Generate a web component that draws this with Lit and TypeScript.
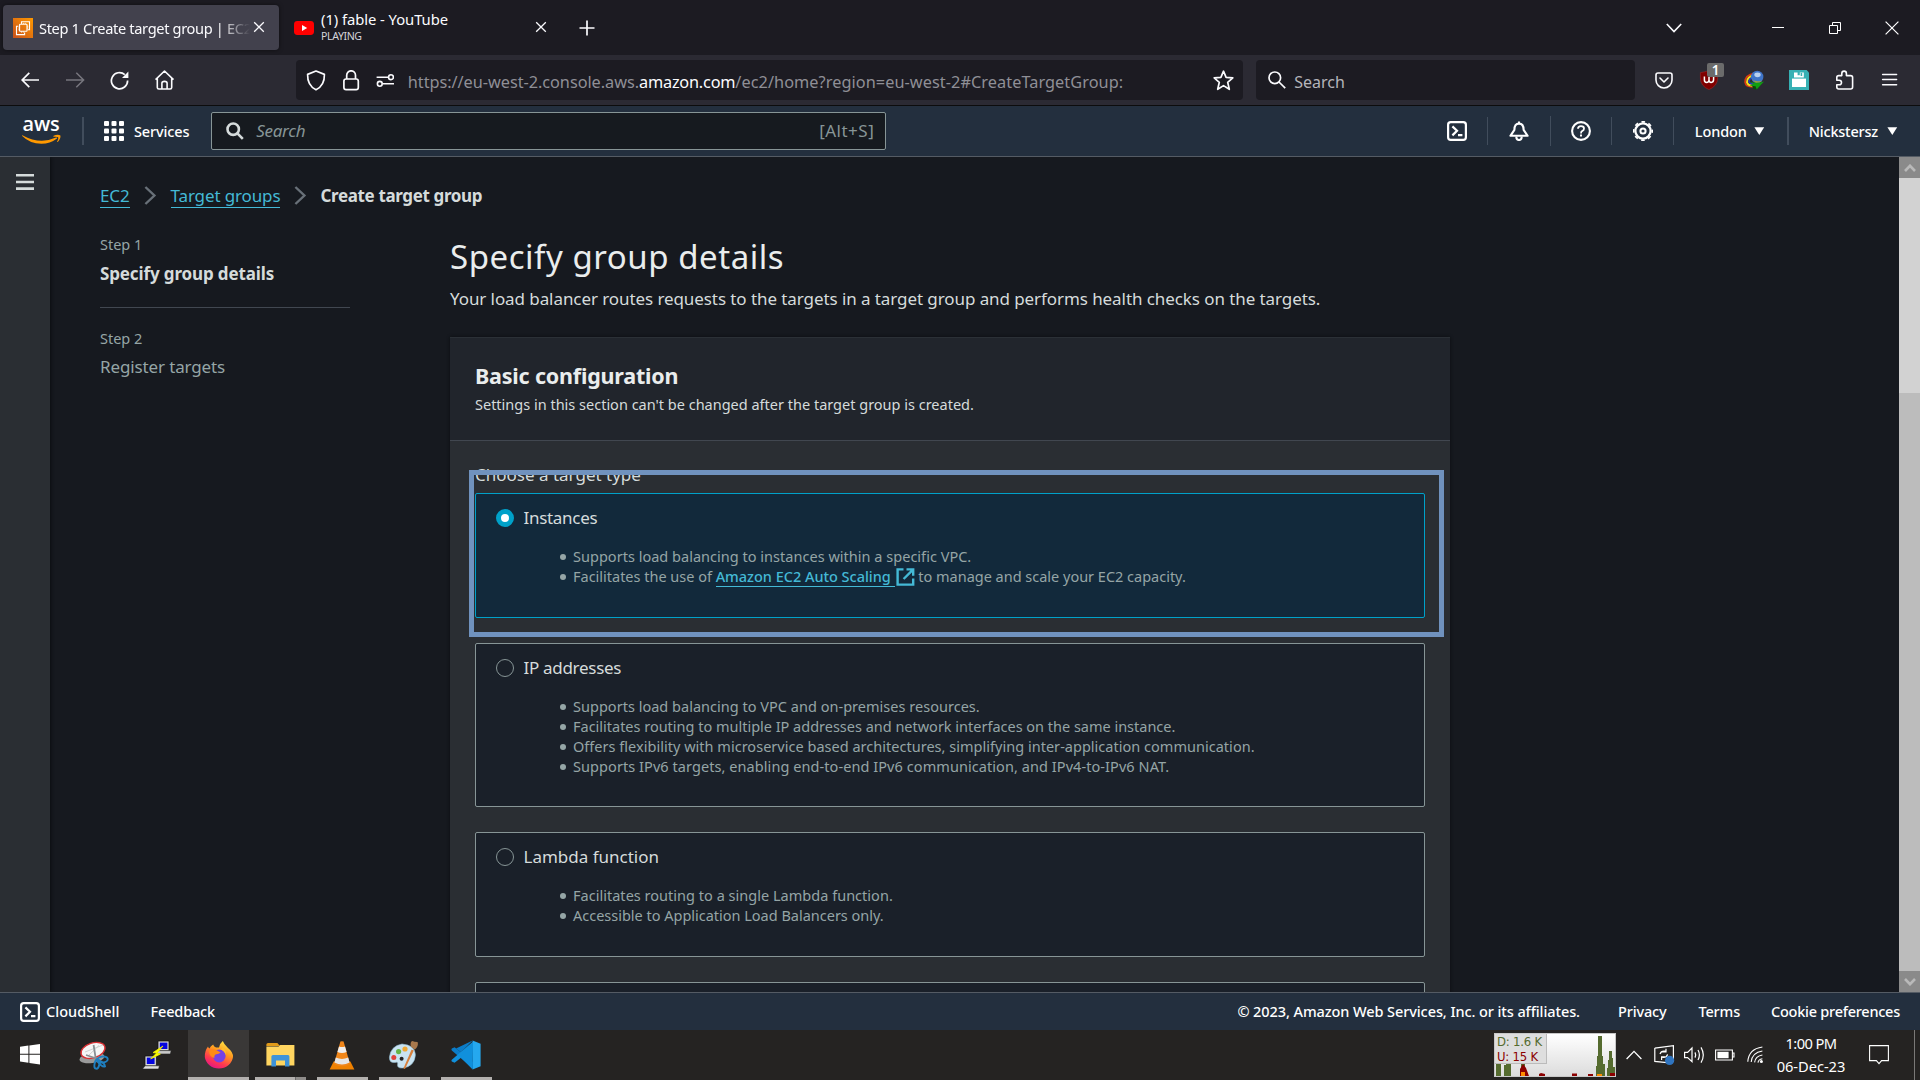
import { LitElement, html, css, svg } from "lit";
import { customElement } from "lit/decorators.js";

interface TargetType {
  id: string;
  label: string;
  points: unknown[];
}

const externalIcon = html`<svg class="ext" width="19" height="18" viewBox="0 0 19 18" fill="none" stroke="currentColor" stroke-width="2.4"><path d="M7.5 1.4H1.6V16.6H17.2V10.5M10.5 1.4H17.2V7.8M17 1.6L7.6 11"/></svg>`;

const TARGET_TYPES: TargetType[] = [
  {
    id: "instances",
    label: "Instances",
    points: [
      "Supports load balancing to instances within a specific VPC.",
      html`Facilitates the use of <a class="link asg">Amazon EC2 Auto Scaling&nbsp;</a>${externalIcon} to manage and scale your EC2 capacity.`,
    ],
  },
  {
    id: "ip",
    label: "IP addresses",
    points: [
      "Supports load balancing to VPC and on-premises resources.",
      "Facilitates routing to multiple IP addresses and network interfaces on the same instance.",
      "Offers flexibility with microservice based architectures, simplifying inter-application communication.",
      "Supports IPv6 targets, enabling end-to-end IPv6 communication, and IPv4-to-IPv6 NAT.",
    ],
  },
  {
    id: "lambda",
    label: "Lambda function",
    points: [
      "Facilitates routing to a single Lambda function.",
      "Accessible to Application Load Balancers only.",
    ],
  },
  { id: "alb", label: "", points: [] },
];

const closeIcon = html`<svg width="12" height="12" viewBox="0 0 12 12" stroke="#fbfbfe" stroke-width="1.3"><path d="M1.2 1.2L10.8 10.8M10.8 1.2L1.2 10.8"/></svg>`;

const cloudShellIcon = html`<svg width="20" height="20" viewBox="0 0 20 20" fill="none" stroke="#fff" stroke-width="2.2"><rect x="1.1" y="1.1" width="17.8" height="17.8" rx="2.6"/><path d="M5.4 5.4L10 9.8L5.4 14.4M11 14.2H15.4"/></svg>`;

@customElement("app-root")
export class AppRoot extends LitElement {
  static styles = css`
    :host {
      display: flex;
      flex-direction: column;
      width: 1920px;
      height: 1080px;
      overflow: hidden;
      background: #16191f;
      color: #d5dbdb;
      font-family: "Noto Sans", "Open Sans", sans-serif;
      font-size: 14.5px;
      white-space: nowrap;
    }
    * { box-sizing: border-box; }
    svg { display: block; flex: none; }
    .row { display: flex; align-items: center; }

    /* browser tabs */
    .tabs { height: 55px; background: #1c1b22; padding: 5px 21px 5px 3px; flex: none; }
    .tab { display: flex; align-items: center; height: 45px; border-radius: 4px; color: #fbfbfe; }
    .tab.active { width: 276px; background: #42414d; box-shadow: 0 0 4px rgba(0, 0, 0, 0.5); padding: 1px 14px 0 10px; }
    .tab-title { width: 215px; margin-left: 6px; overflow: hidden; font-size: 14.6px; letter-spacing: -0.34px; line-height: 20px; -webkit-mask-image: linear-gradient(to right, #000 180px, transparent 211px); mask-image: linear-gradient(to right, #000 180px, transparent 211px); }
    .tab.active svg:last-child { margin-left: -1px; margin-top: -2px; }
    .tab.idle { width: 275px; padding: 0 7px 0 15px; }
    .tab-stack { margin: -2px 0 0 7px; flex: 1; }
    .tab-name { font-size: 14.8px; line-height: 18px; letter-spacing: -0.06px; }
    .tab-sub { font-size: 10.6px; line-height: 14px; letter-spacing: -0.4px; color: #d5d5da; padding-top: 1px; }
    .idle-close { margin-top: -1px; }
    .new-tab { margin-left: 25px; }
    .win { margin-left: auto; display: flex; align-items: center; }
    .list-tabs { margin-right: 90px; }
    .restore { margin: 0 44px 0 45px; }

    /* browser toolbar */
    .toolbar { height: 51px; background: #2b2a33; border-bottom: 1px solid #0c0c0d; padding: 0 21px; flex: none; }
    .nav { display: flex; align-items: center; width: 275px; gap: 26px; }
    .fwd { margin: 0 -1px 0 1px; }
    .url { display: flex; align-items: center; width: 948px; height: 40px; border-radius: 4px; background: #1c1b22; padding: 0 9px 0 10px; }
    .url-text { margin-left: 14px; font-size: 16.3px; line-height: 24px; color: #8f8f96; letter-spacing: -0.04px; padding-top: 3px; }
    .url-path { letter-spacing: 0.06px; }
    .url-host { color: #fbfbfe; letter-spacing: -0.2px; }
    .star { margin-left: auto; }
    .find { display: flex; align-items: center; width: 379px; height: 40px; margin-left: 13px; border-radius: 4px; background: #1c1b22; padding-left: 12px; font-size: 16px; color: #b4b4ba; }
    .find-text { margin: 4px 0 0 8px; letter-spacing: 0; }
    .exts { display: flex; align-items: center; margin-left: 19px; gap: 25px; }
    .ublock { position: relative; }
    .count { position: absolute; left: 8px; top: -7px; width: 17px; height: 14px; border-radius: 2px; background: #6b6b6b; color: #fff; font: 600 13.5px/14px "Noto Sans", sans-serif; text-align: center; }

    /* console header */
    .aws { height: 51px; background: #232f3e; border-bottom: 1px solid #545b64; flex: none; color: #fff; font-weight: 500; letter-spacing: -0.15px; }
    .logo { margin-left: 22px; overflow: visible; }
    .services { margin-left: 10px; }
    .omni { display: flex; align-items: center; width: 675px; height: 38px; margin-left: 22px; border: 1px solid #879596; border-radius: 2px; background: #161a1f; color: #879596; font-weight: 400; font-size: 17px; padding: 0 11px 1px 14px; }
    .omni-text { font-style: italic; margin-left: 12px; flex: 1; letter-spacing: -0.3px; }
    .hot { letter-spacing: 0.5px; }
    .tools { display: flex; align-items: center; margin-left: auto; padding-right: 22px; }
    .lon { margin-right: 7px; letter-spacing: -0.1px; }
    .user { margin-right: 9px; letter-spacing: -0.22px; }

    /* body */
    .main { display: flex; height: 835px; flex: none; overflow: hidden; }
    .rail { width: 50px; background: #2a2e33; box-shadow: 1px 0 3px #0b0d10; padding: 17px 0 0 16px; z-index: 1; }
    .page { width: 1849px; padding: 26px 0 0 50px; }
    .crumbs { display: flex; align-items: center; height: 25px; font-size: 17px; letter-spacing: -0.13px; }
    .crumb-sep { margin: 0 14px 0 14px; }
    .current { font-weight: 700; letter-spacing: -0.36px; margin-left: -1px; }
    .link { color: #44b9d6; box-shadow: 0 1px 0 #44b9d6; cursor: pointer; }
    .crumbs .link { height: 23px; line-height: 23px; }
    .cols { display: flex; gap: 100px; }
    .steps { width: 250px; padding-top: 26px; }
    .step-no { line-height: 20px; color: #95a5a6; letter-spacing: 0; }
    .step-name { font-size: 17px; line-height: 25px; color: #95a5a6; letter-spacing: -0.13px; margin-top: 6px; }
    .step-name.on { font-weight: 700; color: #d5dbdb; margin-top: 7px; }
    .step-line { height: 1px; background: #414750; margin: 21px 0 20px; }
    .wizard { width: 1000px; padding-top: 26px; }
    h1, h2, ul { margin: 0; padding: 0; }
    h1 { font-size: 33px; font-weight: 400; line-height: 45px; letter-spacing: 0.54px; color: #eaeded; }
    .lead { margin-top: 7px; font-size: 17px; line-height: 25px; letter-spacing: -0.08px; }
    .card { margin-top: 26px; background: #2a2e33; box-shadow: 0 0 3px #0b0d10; height: 800px; }
    .card-head { height: 104px; border-top: 1px solid #2b3036; border-bottom: 1px solid #414750; background: #21252c; padding: 24px 0 0 25px; }
    h2 { font-size: 21.5px; line-height: 28px; letter-spacing: -0.2px; color: #eaeded; }
    .card-sub { margin-top: 4px; line-height: 20px; }
    .card-body { padding: 21px 25px 0; position: relative; }
    .field { font-size: 17px; line-height: 25px; letter-spacing: 0; margin-bottom: 6px; }
    .tile { height: 125px; border: 1px solid #879596; border-radius: 2px; background: #1a2029; padding: 11px 20px 0; margin-bottom: 25px; }
    .tile.ip { height: 164px; }
    .tile.instances { border-color: #00a1c9; background: #12293b; }
    .tile-head { display: flex; align-items: center; height: 25px; font-size: 17px; letter-spacing: -0.3px; }
    .lambda .tile-head { letter-spacing: 0; }
    .radio { width: 18px; height: 18px; border: 1.4px solid #879596; border-radius: 50%; margin-right: 9.5px; }
    .instances .radio { border: 5.5px solid #00a1c9; background: #fff; }
    .points { list-style: none; margin-top: 16px; padding-left: 64px; color: #95a5a6; }
    .points li { display: flex; align-items: center; height: 20px; white-space: pre; letter-spacing: 0.02px; }
    .points li:nth-child(4) { letter-spacing: 0.07px; }
    .points li:nth-child(2) { letter-spacing: -0.01px; }
    .points li::before { content: ""; width: 6px; height: 6px; border-radius: 50%; background: #95a5a6; margin: 1px 7px 0 0; }
    .asg { height: 20px; line-height: 20px; letter-spacing: -0.02px; font-weight: 500; }
    .ext { color: #44b9d6; margin: 1px 0 0 1px; }
    .marker { position: absolute; left: 19px; top: 29px; width: 975px; height: 167px; border: 5px solid #7092be; }

    .scroll { width: 21px; display: flex; flex-direction: column; background: #bcbcbc; }
    .btn { height: 21px; background: #8a8a8a; display: grid; place-items: center; }
    .thumb { height: 215px; background: #d2d2d2; margin-bottom: auto; }

    /* console footer */
    .foot { height: 38px; background: #232f3e; border-top: 1px solid #545b64; flex: none; color: #fff; font-weight: 500; padding: 0 20px; letter-spacing: -0.16px; }
    .foot span { padding-bottom: 2px; }
    .cs { margin: 0 31px 0 6px; letter-spacing: 0.02px; }
    .legal { margin-left: auto; letter-spacing: -0.09px; }
    .terms { margin: 0 31px 0 32px; }
    .privacy { margin-left: 38px; }
    .cookie { letter-spacing: -0.25px; }

    /* desktop taskbar */
    .task { height: 50px; background: #252322; flex: none; }
    .app { display: flex; flex-direction: column; align-items: center; justify-content: flex-end; height: 50px; width: 62px; }
    .app svg { margin: 0 auto 7px; }
    .app.start svg { margin: 0 auto 6px 20px; }
    .app.wide { width: 63px; }
    .app::after { content: ""; height: 3px; width: 51px; background: transparent; }
    .app.open::after { background: #b3b0ae; }
    .app.focus { background: #3a3837; width: 61px; margin-right: 0; }
    .app.focus::after { width: 61px; }
    .app.multi::after { background: linear-gradient(to right, #b3b0ae 40px, #6c6a69 40px 41px, #8f8c8a 41px); }
    .tray { display: flex; align-items: center; margin-left: auto; height: 50px; color: #fff; }
    .meter { position: relative; width: 122px; height: 44px; border: 1px solid #c8c8c8; background: linear-gradient(#fff, #dcdcdc); }
    .meter-label { position: absolute; left: 0; top: 0; width: 52px; height: 30px; background: #dedede; border-right: 1px solid #bbb; border-bottom: 1px solid #bbb; padding-left: 2px; font: 13px/15px "DejaVu Sans Condensed", "DejaVu Sans", sans-serif; letter-spacing: -0.2px; }
    .meter svg { position: absolute; left: 0; top: 0; }
    .down { color: #556b2f; }
    .up { color: #8b0000; }
    .clock { width: 90px; text-align: center; font-size: 14.7px; line-height: 23px; letter-spacing: -0.05px; margin-top: -1px; }
    .time { letter-spacing: -0.6px; }
    .peek { width: 1px; height: 50px; background: #7a7877; margin: 0 5px 0 25px; }
  `;

  private tabs() {
    return html`<div class="tabs row">
      <div class="tab active">
        <svg width="20" height="20" viewBox="0 0 20 20"><defs><linearGradient id="ec" x1="0" y1="1" x2="1" y2="0"><stop offset="0" stop-color="#c8511b"/><stop offset="1" stop-color="#ff9900"/></linearGradient></defs><rect width="20" height="20" fill="url(#ec)"/><g fill="none" stroke="#fff" stroke-width="1.1"><path d="M8.5 5.5V3.8H16.5V11.8H14.6"/><rect x="6.6" y="6.3" width="7.4" height="7" rx=".5"/><path d="M5.4 8.3H3.5V16.6H11.6V14.6"/><path d="M8.5 4.9V6M10.3 4.9V6M12.2 4.9V6M8.5 13.3V14.6M10.3 13.3V14.6M14 8.2H15.3M14 10H15.3M5.4 10H6.6M5.4 11.8H6.6" stroke-width=".8"/></g></svg>
        <div class="tab-title">Step 1 Create target group | EC2</div>
        ${closeIcon}
      </div>
      <div class="tab idle">
        <svg width="20" height="14" viewBox="0 0 20 14"><rect width="20" height="14" rx="3.4" fill="#f00"/><path d="M8 4L13.2 7L8 10Z" fill="#fff"/></svg>
        <div class="tab-stack"><div class="tab-name">(1) fable - YouTube</div><div class="tab-sub">PLAYING</div></div>
        <span class="idle-close">${closeIcon}</span>
      </div>
      <svg class="new-tab" width="16" height="16" viewBox="0 0 16 16" stroke="#fbfbfe" stroke-width="1.7"><path d="M8 .5V15.5M.5 8H15.5"/></svg>
      <div class="win">
        <svg class="list-tabs" width="16" height="10" viewBox="0 0 16 10" fill="none" stroke="#fbfbfe" stroke-width="1.6"><path d="M.8 1L8 8.6L15.2 1"/></svg>
        <svg width="12" height="1" viewBox="0 0 12 1" fill="#fff"><path d="M0 0H12V1H0Z"/></svg>
        <svg class="restore" width="12" height="12" viewBox="0 0 12 12" fill="none" stroke="#fff"><path d="M.5 3.5H8.5V11.5H.5ZM3.5 3.5V.5H11.5V8.5H8.5"/></svg>
        <svg width="14" height="14" viewBox="0 0 14 14" fill="none" stroke="#fff" stroke-width="1.2"><path d="M.6 .6L13.4 13.4M13.4 .6L.6 13.4"/></svg>
      </div>
    </div>`;
  }

  private toolbar() {
    return html`<div class="toolbar row">
      <div class="nav">
        <svg width="18" height="16" viewBox="0 0 18 16" fill="none" stroke="#fbfbfe" stroke-width="1.7"><path d="M18 8H1.2M8.3 .8L1.2 8L8.3 15.2"/></svg>
        <svg class="fwd" width="19" height="16" viewBox="0 0 19 16" fill="none" stroke="#77767e" stroke-width="1.5"><path d="M0 8H17.4M10.3 .8L17.6 8L10.3 15.2"/></svg>
        <svg width="19" height="19" viewBox="0 0 19 19" fill="none" stroke="#fbfbfe" stroke-width="1.7"><path d="M14.8 3.6A8.1 8.1 0 1 0 17.6 9.6"/><path d="M18.4 .6V7H12Z" fill="#fbfbfe" stroke="none"/></svg>
        <svg width="20" height="20" viewBox="0.5 0 20 20" fill="none" stroke="#fbfbfe" stroke-width="1.6" stroke-linejoin="round"><path d="M1 9.6L10 1L19 9.6M2.8 8.2V17.4Q2.8 19 4.4 19H15.6Q17.2 19 17.2 17.4V8.2M7.4 19V13.2Q7.4 11.4 10 11.4Q12.6 11.4 12.6 13.2V19"/></svg>
      </div>
      <div class="url">
        <svg width="20" height="21" viewBox="0 0 20 21" fill="none" stroke="#fbfbfe" stroke-width="1.7" stroke-linejoin="round"><path d="M10 1L18.4 4.4C18.6 11 16.6 16.6 10 19.8C3.4 16.6 1.4 11 1.6 4.4Z"/></svg>
        <svg width="50" height="21" viewBox="-17 0 50 21" fill="none" stroke="#fbfbfe" stroke-width="1.7"><rect x=".9" y="9" width="14.4" height="10.6" rx="2.2"/><path d="M3.7 9V5.2A4.4 4.4 0 0 1 12.5 5.2V9"/></svg>
        <svg width="18" height="13" viewBox="-.6 0 18 13" fill="none" stroke="#fbfbfe" stroke-width="1.6"><path d="M0 3.2H11.6M6 9.8H17.6"/><circle cx="14.4" cy="3.2" r="2.4"/><circle cx="3.2" cy="9.8" r="2.4"/></svg>
        <div class="url-text">https://eu-west-2.console.aws.<span class="url-host">amazon.com</span><span class="url-path">/ec2/home?region=eu-west-2#CreateTargetGroup:</span></div>
        <svg class="star" width="21" height="21" viewBox="0 0 21 21" fill="none" stroke="#fbfbfe" stroke-width="1.7" stroke-linejoin="round"><path d="M10.5 1.2L13.1 7.4L19.8 7.9L14.7 12.3L16.3 19.3L10.5 15.6L4.7 19.3L6.3 12.3L1.2 7.9L7.9 7.4Z"/></svg>
      </div>
      <div class="find">
        <svg width="18" height="18" viewBox="0 0 18 18" fill="none" stroke="#fbfbfe" stroke-width="1.7"><circle cx="6.8" cy="6.8" r="5.8"/><path d="M11 11L17.2 17.2"/></svg>
        <span class="find-text">Search</span>
      </div>
      <div class="exts">
        <svg width="20" height="17" viewBox="-1 0 20 17" fill="none" stroke="#fbfbfe" stroke-width="1.6" stroke-linejoin="round" stroke-linecap="round"><path d="M1 3Q1 1 3 1H15Q17 1 17 3V8A8 8 0 0 1 1 8Z"/><path d="M5 6L9 10L13 6"/></svg>
        <div class="ublock"><svg width="20" height="20" viewBox="0 0 20 20"><path d="M10 .6Q14 2 18.6 2.6V8Q18.6 16 10 19.6Q1.4 16 1.4 8V2.6Q6 2 10 .6Z" fill="#800000" stroke="#a03030" stroke-width=".5"/><path d="M5.4 6.6V10Q5.4 12.4 7.6 12.4Q10 12.4 10 10V7M10 10Q10 12.4 12.2 12.4Q14.6 12.4 14.6 9.6V7" fill="none" stroke="#fff" stroke-width="1.5"/></svg><span class="count">1</span></div>
        <svg width="20" height="20" viewBox="0 0 20 20"><path d="M10.5 3.4Q1 5 1 12.2Q2 17.5 9 16.6" fill="none" stroke="#d83a12" stroke-width="1.6"/><path d="M10.5 5Q3 6.6 3 12.2Q4 16 9 15.4" fill="none" stroke="#f6e01c" stroke-width="2"/><path d="M10 6.8Q5 8.4 5 12Q6 14.2 10 13.8" fill="none" stroke="#2040c0" stroke-width="1.6"/><circle cx="13.2" cy="7" r="6.2" fill="#3f74c8"/><ellipse cx="13.5" cy="4.8" rx="3.2" ry="2.4" fill="#b8d0f0"/><path d="M8 9.6Q12 12.6 18.4 10.4Q16 13 12 13Z" fill="#a8a040"/><path d="M6 11.5Q12 14 20 11.6L12.6 19.6L11.4 16.4L5.6 15.4L9.6 14Z" fill="#10a010"/><path d="M8 15.8L11.6 16.6L12.6 19.6L9.6 19Z" fill="#0a4a0a"/></svg>
        <svg width="20" height="20" viewBox="0 0 20 20"><path d="M0 0H17.6L20 2.4V20H0Z" fill="#36b0b4"/><path d="M5 2.6H8.6V5.2H10.8V2.6H14.8V7.4H5Z" fill="#fff"/><path d="M11.6 2.8H13.2V6H11.6Z" fill="#36b0b4"/><path d="M3 8.6H17V17H3Z" fill="#fff"/></svg>
        <svg width="20" height="20" viewBox="-1.6 0 20 20" fill="none" stroke="#fbfbfe" stroke-width="1.6" stroke-linejoin="round"><path d="M6.2 5.6V3.4A2.3 2.3 0 0 1 10.8 3.4V5.6H15Q17 5.6 17 7.6V17Q17 19 15 19H3.2Q1.2 19 1.2 17V14.8H3.6A2.2 2.2 0 0 0 3.6 10.2H1.2V7.6Q1.2 5.6 3.2 5.6Z"/></svg>
        <svg width="20" height="14" viewBox="-2.6 0 20 14" stroke="#fbfbfe" stroke-width="1.5" stroke-linecap="round"><path d="M1 1.5H15M1 6.5H15M1 11.7H15"/></svg>
      </div>
    </div>`;
  }

  private header() {
    const dots = [0, 7.5, 15].flatMap((y) => [0, 7.5, 15].map((x) => svg`<rect x=${x} y=${y} width="5" height="5" rx="1"/>`));
    const arrow = html`<svg width="11" height="8" viewBox="0 0 11 8"><path d="M.4 .2H10.2L5.3 8Z" fill="#fff"/></svg>`;
    return html`<div class="aws row">
      <svg class="logo" width="40" height="28" viewBox="0 0 40 28"><text x="0.6" y="14" font-family="Open Sans, sans-serif" font-size="20" font-weight="600" fill="#fff" textLength="37" lengthAdjust="spacingAndGlyphs">aws</text><path d="M.4 18.2Q18 28 34 20.6Q35.6 20.2 35 21.4Q28 26.8 19.4 26.8Q8 26.8 .2 19Q-.2 18 .4 18.2Z" fill="#f90"/><path d="M31.6 18.8Q36 17 38.4 18.6Q39 21.6 35.8 25Q34.8 25.4 35.2 24.4Q36.8 21.4 36.2 20.2Q34.8 19.4 31.8 19.8Q30.8 19.6 31.6 18.8Z" fill="#f90"/></svg>
      <svg width="22" height="28" viewBox="0 0 22 28"><path d="M20 0H22V28H20Z" fill="#414d5c"/></svg>
      <svg width="40" height="20" viewBox="-20 0 40 20" fill="#fff">${dots}</svg>
      <span class="services">Services</span>
      <div class="omni">
        <svg width="18" height="18" viewBox="0 0 18 18" fill="none" stroke="#d5dbdb" stroke-width="2.6"><circle cx="7.2" cy="7.2" r="5.7"/><path d="M11.4 11.4L16.8 16.8"/></svg>
        <span class="omni-text">Search</span><span class="hot">[Alt+S]</span>
      </div>
      <div class="tools">
        ${cloudShellIcon}
        <svg width="42" height="28"><path d="M20 0H21V28H20Z" fill="#414d5c"/></svg>
        <svg width="20" height="20" viewBox="0 0 20 20" fill="none" stroke="#fff" stroke-width="2.1" stroke-linejoin="round"><path d="M10 .4V2.4M1.4 14.8L5.4 8.8Q5.4 2.6 10 2.6Q14.6 2.6 14.6 8.8L18.6 14.8Z"/><path d="M7.4 15.4V16.6A2.6 2.4 0 0 0 12.6 16.6V15.4"/></svg>
        <svg width="42" height="30"><path d="M21 0H22V30H21Z" fill="#414d5c"/></svg>
        <svg width="20" height="20" viewBox="0 0 20 20" fill="none" stroke="#fff" stroke-width="2.1"><circle cx="10" cy="10" r="8.9"/><path d="M7 7.8Q7 5.2 10 5.2Q13 5.2 13 7.6Q13 9.2 11.4 9.9Q10 10.5 10 12.4" stroke-width="1.8"/><path d="M9 13.6H11V15.6H9Z" fill="#fff" stroke="none"/></svg>
        <svg width="42" height="28"><path d="M20 0H21V28H20Z" fill="#414d5c"/></svg>
        <svg width="20" height="20" viewBox="0 0 20 20" fill="none" stroke="#fff"><circle cx="10" cy="10" r="7.6" stroke-width="2.2"/><circle cx="10" cy="10" r="9.2" stroke-width="1.7" stroke-dasharray="3.6 3.625" stroke-dashoffset="1.8"/><circle cx="10" cy="10" r="2.6" stroke-width="2"/></svg>
        <svg width="42" height="28"><path d="M20 0H21V28H20Z" fill="#414d5c"/></svg>
        <span class="lon">London</span>${arrow}
        <svg width="44" height="28"><path d="M22 0H24V28H22Z" fill="#414d5c"/></svg>
        <span class="user">Nickstersz</span>${arrow}
      </div>
    </div>`;
  }

  private body() {
    const sep = html`<svg class="crumb-sep" width="13" height="19" viewBox="0 0 13 19" fill="none" stroke="#687078" stroke-width="2.4"><path d="M1.4 1L10.4 9.5L1.4 18"/></svg>`;
    return html`<div class="main">
      <div class="rail"><svg width="18" height="16" viewBox="0 0 18 16" fill="#d5dbdb"><path d="M0 0H18V2.6H0ZM0 6.7H18V9.3H0ZM0 13.3H18V16H0Z"/></svg></div>
      <div class="page">
        <div class="crumbs"><a class="link">EC2</a>${sep}<a class="link">Target groups</a>${sep}<span class="current">Create target group</span></div>
        <div class="cols">
          <div class="steps">
            <div class="step-no">Step 1</div>
            <div class="step-name on">Specify group details</div>
            <div class="step-line"></div>
            <div class="step-no">Step 2</div>
            <div class="step-name">Register targets</div>
          </div>
          <div class="wizard">
            <h1>Specify group details</h1>
            <div class="lead">Your load balancer routes requests to the targets in a target group and performs health checks on the targets.</div>
            <div class="card">
              <div class="card-head">
                <h2>Basic configuration</h2>
                <div class="card-sub">Settings in this section can't be changed after the target group is created.</div>
              </div>
              <div class="card-body">
                <div class="field">Choose a target type</div>
                ${TARGET_TYPES.map((t) => html`<div class="tile ${t.id}">
                  ${t.label ? html`<div class="tile-head"><span class="radio"></span>${t.label}</div>
                  <ul class="points">${t.points.map((p) => html`<li>${p}</li>`)}</ul>` : ""}
                </div>`)}
                <div class="marker"></div>
              </div>
            </div>
          </div>
        </div>
      </div>
      <div class="scroll">
        <div class="btn"><svg width="12" height="8" viewBox="0 0 12 8" fill="none" stroke="#b9b9b9" stroke-width="2.6"><path d="M1 7L6 1.8L11 7"/></svg></div>
        <div class="thumb"></div>
        <div class="btn"><svg width="12" height="8" viewBox="0 0 12 8" fill="none" stroke="#b9b9b9" stroke-width="2.6"><path d="M1 1L6 6.2L11 1"/></svg></div>
      </div>
    </div>`;
  }

  private footer() {
    return html`<div class="foot row">
      ${cloudShellIcon}<span class="cs">CloudShell</span><span>Feedback</span>
      <span class="legal">© 2023, Amazon Web Services, Inc. or its affiliates.</span>
      <span class="privacy">Privacy</span><span class="terms">Terms</span><span class="cookie">Cookie preferences</span>
    </div>`;
  }

  private taskbar() {
    return html`<div class="task row">
      <div class="app start"><svg width="20" height="27" viewBox="0 0 20 27" fill="#fff"><path d="M0 2.8L8.4 1.6V9.8H0ZM9.4 1.4L20 0V9.8H9.4ZM0 10.8H8.4V18.8L0 17.6ZM9.4 10.8H20V20.4L9.4 19Z"/></svg></div>
      <div class="app wide"><svg width="30" height="29" viewBox="0 0 30 29"><ellipse cx="13" cy="17" rx="12.6" ry="5" fill="#9a9a9a" transform="rotate(-8 13 17)"/><ellipse cx="14" cy="9.4" rx="12.4" ry="7.4" fill="#f6f6f6" stroke="#d83034" stroke-width="1.4" transform="rotate(-18 14 9.4)"/><path d="M6 11L24 4M9 15L20 4.4" stroke="#d0d0d0" stroke-width="1"/><path d="M14.6 4L16.8 18M7 14L19 18" stroke="#8a8f94" stroke-width="1.8"/><g fill="none" stroke="#1f7fc0" stroke-width="1.9"><ellipse cx="23.4" cy="18.6" rx="5.4" ry="3" transform="rotate(-8 23.4 18.6)"/><ellipse cx="18" cy="23" rx="2.4" ry="4.8" transform="rotate(12 18 23)"/><path d="M18 19.6Q25 20 26 25.4Q23 26.6 18 19.6"/></g></svg></div>
      <div class="app wide"><svg width="30" height="30" viewBox="0 0 30 30"><path d="M16 1H27V11H16Z" fill="#d8d8d8" stroke="#111" stroke-width=".8"/><path d="M17.8 2.6H25.4V9H17.8Z" fill="#0505e0"/><path d="M14 14L16.4 10.6H29.2L28.4 14Z" fill="#c8c8c8" stroke="#222" stroke-width=".6"/><path d="M3 16H14.4V26H3Z" fill="#d8d8d8" stroke="#111" stroke-width=".8"/><path d="M4.8 17.6H12.6V24H4.8Z" fill="#0505e0"/><path d="M.6 29L3 25.8H17.4L16.6 29Z" fill="#e0e0e0" stroke="#222" stroke-width=".6"/><path d="M21 6L11 12.6L14.6 13L8.6 19L18.4 14L15 13Z" fill="#ff0" stroke="#ee0" stroke-width=".8"/></svg></div>
      <div class="app open focus"><svg width="30" height="29" viewBox="0 0 30 29"><defs><linearGradient id="ff" x1=".8" y1="0" x2=".3" y2="1"><stop offset="0" stop-color="#fff04a"/><stop offset=".4" stop-color="#ff9a1f"/><stop offset=".75" stop-color="#ff3750"/><stop offset="1" stop-color="#e31587"/></linearGradient></defs><path d="M18.8 0Q20 3.4 24 7Q29.2 11 29 16A14.2 13 0 0 1 .8 16Q.6 10 4 5.6Q4.4 7 5.4 7.6Q6.6 5 9.2 3.6Q9.4 5.6 12 6.4H15Q15.6 2.6 18.8 0Z" fill="url(#ff)"/><circle cx="15.2" cy="15" r="6.4" fill="#7542e5"/><path d="M5 10Q9 7 13 9.4L16.6 11.4Q14.6 13.4 12 13.2Q9.6 14.6 10.6 17Q5.4 16 5 10Z" fill="#ff8a16"/><path d="M17 8.6Q21.4 10.4 21.6 14.6Q23 9.6 18.8 6.6Z" fill="#ffbd2e"/></svg></div>
      <div class="app open multi"><svg width="29" height="28" viewBox="0 0 29 28"><path d="M.4 2.6Q.4 1 2 1H11.4L14 4H.4Z" fill="#e09a1a"/><path d="M.4 4.6H12.6L14.2 3H28.4V23.6H.4Z" fill="#ffd560"/><path d="M5.4 24.6V14.6Q5.4 13 7 13H22Q23.4 13 23.4 14.6V24.6H19V18.4H10V24.6Z" fill="#3f93d8"/></svg></div>
      <div class="app open"><svg width="26" height="29" viewBox="0 0 26 29"><path d="M4.6 20.6H21.4L25.4 28.4H.6Z" fill="#ef8100"/><path d="M11.4 .6Q13 0 14.6 .6L21 23Q13 27.6 5 23Z" fill="#f0861a"/><path d="M10 5.4Q13 6.6 16 5.4L17.6 11Q13 13 8.4 11Z" fill="#eee"/><path d="M6.8 16.6Q13 19.4 19.2 16.6L20.6 21.4Q13 25.6 5.4 21.4Z" fill="#e6e6e6"/></svg></div>
      <div class="app open"><svg width="32" height="30" viewBox="0 0 32 30"><path d="M14 4Q27 5 27.4 15Q26.6 26.6 14.6 28Q9 28.4 9.6 24.6Q10.4 21.4 7.4 22.4Q1 23.4 1.4 17Q2.6 6 14 4Z" fill="#c9e3f1" stroke="#8fb7cd" stroke-width=".6"/><circle cx="5.8" cy="17.4" r="2.5" fill="#e0403c"/><circle cx="10.6" cy="11.6" r="2.6" fill="#67b346"/><circle cx="17" cy="9" r="2.6" fill="#efa836"/><circle cx="13.6" cy="18.8" r="2" fill="#252322"/><path d="M15.4 28.6L23.6 9.4L25.8 10.4L17 29Z" fill="#d8803c"/><path d="M22.8 6.6Q22 1.6 24.4 1Q26 2 29.6 2Q31 6 26.6 9.8Z" fill="#a8784c"/></svg></div>
      <div class="app open"><svg width="30" height="30" viewBox="0 0 30 30"><path d="M21.6 .4L29.6 3.8V26.2L21.6 29.6Z" fill="#25a8ef"/><path d="M21.6 .4L10 12.2L3.6 7.2L.8 8.4Q0 9.2 .8 10.4L22 28.6V22L5 8.6Z" fill="#0b7cc8"/><path d="M21.6 29.6L10 17.8L3.6 22.8L.8 21.6Q0 20.6 .8 19.8L22 1.6V8.2Z" fill="#1090dc"/></svg></div>
      <div class="tray">
        <div class="meter">
          <svg width="120" height="42" viewBox="0 0 120 42"><path d="M1 42V29H6V42ZM9 42V31H11V29H16V42ZM26 42V29H30V42ZM101 42V32H102V22H103V2H107V22H108V30H110V42ZM112 42V34H113V26H114V17H117V24H118V33H120V42Z" fill="#556b2f"/><path d="M25 42V35L28 30L31 34L34 42ZM44 42V40L46 39L50 40V42ZM77 42V39.5H82V42ZM93 42V40H98V42ZM115 42V39H120V42Z" fill="#8b0000"/><path d="M26 42V38H30V42ZM102 42V40H107V42Z" fill="#ff8c00"/></svg>
          <div class="meter-label"><div class="down">D: 1.6 K</div><div class="up">U: 15 K</div></div>
        </div>
        <svg width="38" height="10" viewBox="-10 0 38 10" fill="none" stroke="#fff" stroke-width="1.3"><path d="M.6 9L8 1.4L15.4 9"/></svg>
        <svg width="30" height="22" viewBox="0 0 30 22" fill="none" stroke="#fff" stroke-width="1.2"><path d="M.8 4.2L19.4 1.6V18M13 18.6L.8 17.4V4"/><path d="M6 10Q7 6.4 11.6 7.2M12 4.8V7.8H9M13.6 10.4Q12.6 14 8.4 13.4M7.6 16V12.8H10.8"/><circle cx="15.6" cy="16.4" r="4.6" fill="#2f74c0" stroke="none"/></svg>
        <svg width="31" height="18" viewBox="0 0 31 18" fill="none" stroke="#fff" stroke-width="1.2"><path d="M.6 6.4H3.6L8 2V15.6L3.6 11.6H.6Z"/><path d="M11 6.4Q12.4 9 11 11.6M14 4Q16.8 9 14 14M17 1.4Q21.6 9 17 16.6"/></svg>
        <svg width="32" height="12" viewBox="0 0 32 12"><path d="M.6 1H17.4V11H.6ZM17.4 4H19V8H17.4" fill="none" stroke="#fff" stroke-width="1.1"/><path d="M2.4 2.8H13.6V9.2H2.4Z" fill="#fff"/></svg>
        <svg width="19" height="18" viewBox="0 0 19 18" fill="none" stroke="#fff" stroke-width="1.1"><path d="M.8 15.8Q1.6 3 15.4 1M4.2 16Q5 6.6 15.4 5M7.6 16.4Q8.4 10 15.4 9M11 16.6Q11.4 13.4 15.4 12.8"/><circle cx="14.4" cy="15.6" r="1.5" fill="#fff" stroke="none"/></svg>
        <div class="clock"><div class="time">1:00 PM</div><div>06-Dec-23</div></div>
        <svg width="33" height="20" viewBox="-13 0 33 20" fill="none" stroke="#fff" stroke-width="1.1"><path d="M.6 .6H19.4V15.6H12.6L10 18.6L7.4 15.6H.6Z"/></svg>
        <div class="peek"></div>
      </div>
    </div>`;
  }

  render() {
    return html`${this.tabs()}${this.toolbar()}${this.header()}${this.body()}${this.footer()}${this.taskbar()}`;
  }
}
